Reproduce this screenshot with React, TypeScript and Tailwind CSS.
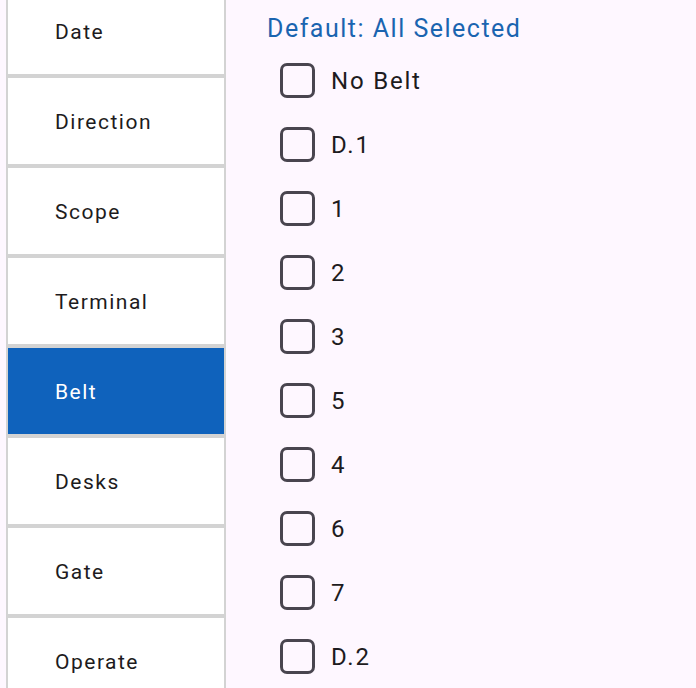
import React from "react";

const tabs = ["Date", "Direction", "Scope", "Terminal", "Belt", "Desks", "Gate", "Operate"];
const belts = ["No Belt", "D.1", "1", "2", "3", "5", "4", "6", "7", "D.2"];

export default function App() {
  return (
    <div
      className="w-[696px] h-[688px] overflow-hidden bg-[#fef7ff] flex"
      style={{ fontFamily: "Roboto, 'Noto Sans', sans-serif" }}
    >
      <div className="ml-[6px] w-[220px] shrink-0 h-full border-x-2 border-[#d3d3d3] bg-[#d3d3d3] overflow-hidden">
        <div className="mt-[-12px] flex flex-col gap-[4px]">
          {tabs.map((t) => (
            <div
              key={t}
              className={`h-[86px] flex items-center pl-[47px] pt-[4px] text-[21px] tracking-[1.5px] ${
                t === "Belt" ? "bg-[#0f62bc] text-white" : "bg-white text-[#1d1b20]"
              }`}
            >
              {t}
            </div>
          ))}
        </div>
      </div>
      <div className="flex-1 pl-[41px]">
        <div className="h-[48px] flex items-center pt-[10px] text-[25px] tracking-[1.5px] text-[#1a64b0]">
          Default: All Selected
        </div>
        <div className="flex flex-col">
          {belts.map((b) => (
            <div key={b} className="h-[64px] flex items-center pl-[13px]">
              <div className="w-[35px] h-[35px] border-[3px] border-[#49454f] rounded-[7px] shrink-0" />
              <span className="ml-[16px] pt-[2px] text-[24px] tracking-[1.8px] text-[#1d1b20]">{b}</span>
            </div>
          ))}
        </div>
      </div>
    </div>
  );
}
